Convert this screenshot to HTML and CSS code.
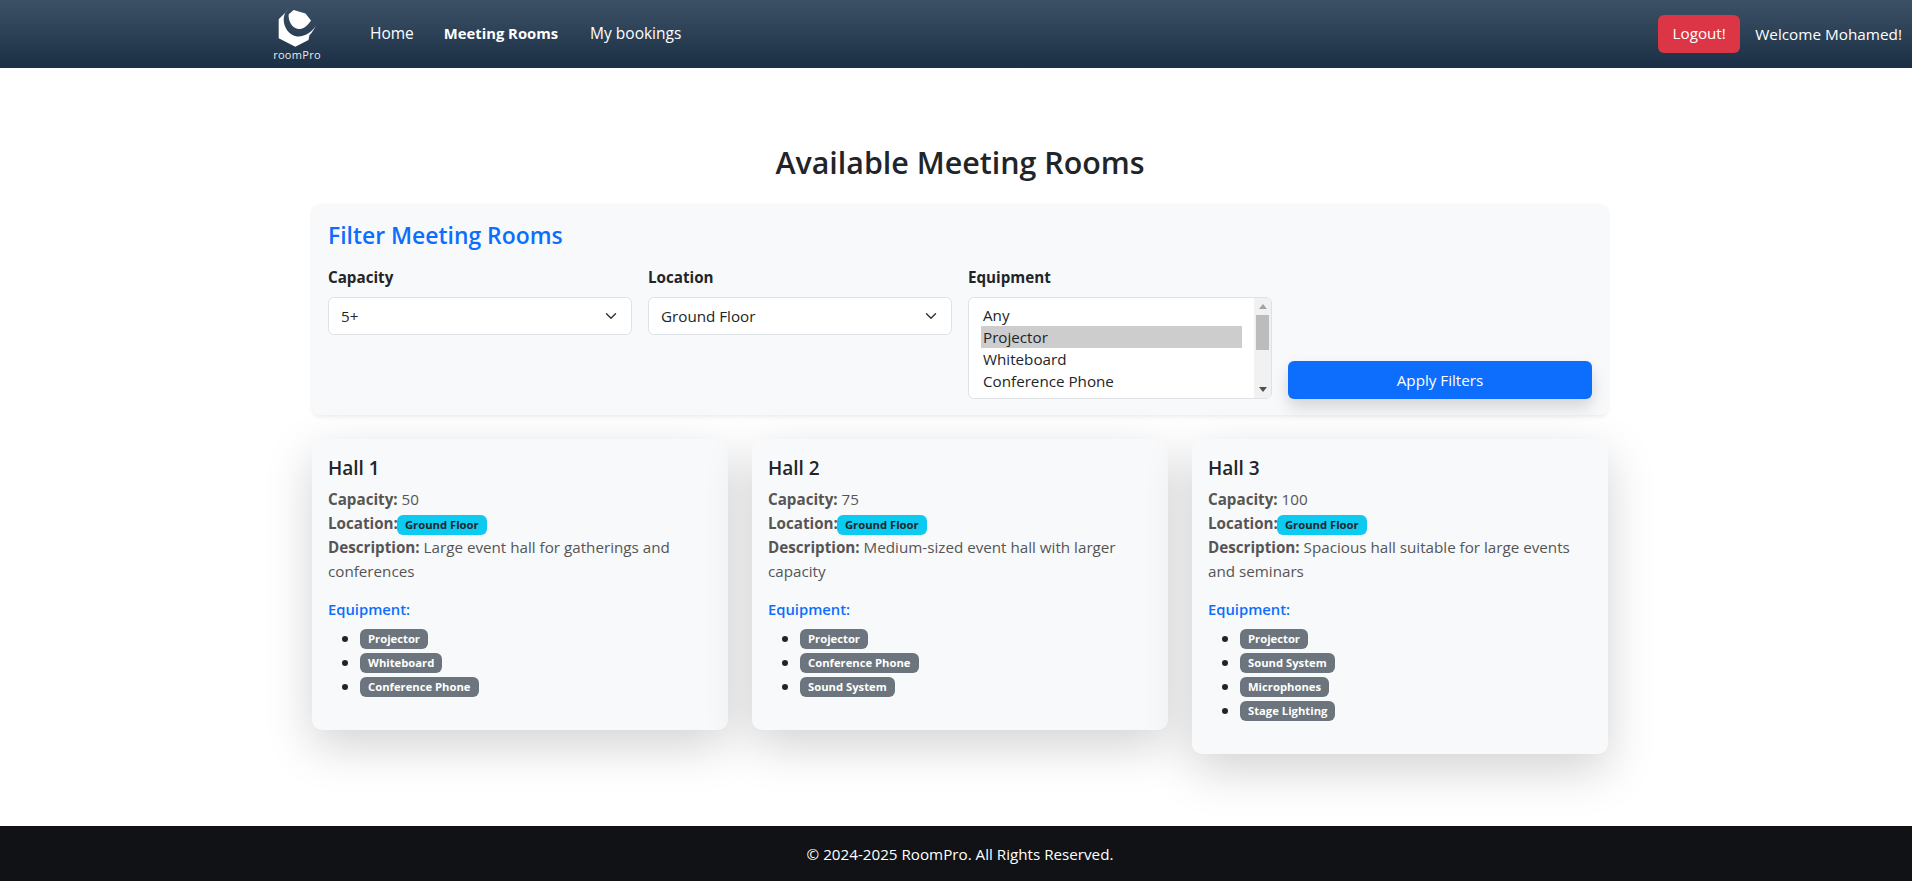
FILE: index.html
```html
<!DOCTYPE html>
<html lang="en">
<head>
    <meta charset="UTF-8">
    <meta name="viewport" content="width=device-width, initial-scale=1.0">
    <title>RoomPro - Meeting Rooms</title>
    <link rel="stylesheet" href="styles.css">
</head>
<body>
    <nav class="navbar">
        <a href="#" class="brand">
            <svg class="brand-icon" viewBox="0 0 40 40" width="40" height="40">
                <path fill="#fff" d="M16.7 2 L28.5 5.5 L34 12.5 C30 19 25 21.5 21 21 C15 20 11 13 11.7 6.3 Z"/>
                <path fill="#fff" d="M11.7 0.3 C8 4 6.5 8 6.7 12 C7 20 12 27 20 28.5 C28 29 36 24 39.3 16.3 C37 22 34 26 32.5 27 L31.5 32 L18.3 38.7 L1.7 30.3 L1.7 11.3 L8 5 Z"/>
            </svg>
            <span class="brand-name">roomPro</span>
        </a>
        <ul class="nav-links">
            <li><a href="#">Home</a></li>
            <li><a href="#" class="active">Meeting Rooms</a></li>
            <li><a href="#">My bookings</a></li>
        </ul>
        <div class="nav-user">
            <button class="btn-logout">Logout!</button>
            <span class="welcome">Welcome Mohamed!</span>
        </div>
    </nav>

    <main class="container">
        <h2 class="page-title">Available Meeting Rooms</h2>

        <form class="filter-panel">
            <h4>Filter Meeting Rooms</h4>
            <div class="filter-row">
                <div class="field">
                    <label for="capacity">Capacity</label>
                    <select id="capacity" class="form-select">
                        <option>5+</option>
                    </select>
                </div>
                <div class="field">
                    <label for="location">Location</label>
                    <select id="location" class="form-select">
                        <option>Ground Floor</option>
                    </select>
                </div>
                <div class="field">
                    <label for="equipment">Equipment</label>
                    <div class="multi-wrap">
                        <select id="equipment" class="form-multi" multiple>
                            <option>Any</option>
                            <option selected>Projector</option>
                            <option>Whiteboard</option>
                            <option>Conference Phone</option>
                            <option>Sound System</option>
                            <option>Microphones</option>
                            <option>Stage Lighting</option>
                        </select>
                        <div class="scroll-track">
                            <svg class="scroll-up" width="8" height="5" viewBox="0 0 8 5"><path fill="#a3a3a3" d="M4 0 8 5H0z"/></svg>
                            <div class="scroll-thumb"></div>
                            <svg class="scroll-down" width="8" height="5" viewBox="0 0 8 5"><path fill="#505050" d="M4 5 8 0H0z"/></svg>
                        </div>
                    </div>
                </div>
                <div class="field field-submit">
                    <button type="submit" class="btn-apply">Apply Filters</button>
                </div>
            </div>
        </form>

        <section class="room-grid">
            <article class="room-card">
                <h5>Hall 1</h5>
                <p>
                    <strong>Capacity:</strong> 50<br>
                    <strong>Location:</strong><span class="badge badge-info">Ground Floor</span><br>
                    <strong>Description:</strong> Large event hall for gatherings and conferences
                </p>
                <h6>Equipment:</h6>
                <ul>
                    <li><span class="badge">Projector</span></li>
                    <li><span class="badge">Whiteboard</span></li>
                    <li><span class="badge">Conference Phone</span></li>
                </ul>
            </article>
            <article class="room-card">
                <h5>Hall 2</h5>
                <p>
                    <strong>Capacity:</strong> 75<br>
                    <strong>Location:</strong><span class="badge badge-info">Ground Floor</span><br>
                    <strong>Description:</strong> Medium-sized event hall with larger capacity
                </p>
                <h6>Equipment:</h6>
                <ul>
                    <li><span class="badge">Projector</span></li>
                    <li><span class="badge">Conference Phone</span></li>
                    <li><span class="badge">Sound System</span></li>
                </ul>
            </article>
            <article class="room-card">
                <h5>Hall 3</h5>
                <p>
                    <strong>Capacity:</strong> 100<br>
                    <strong>Location:</strong><span class="badge badge-info">Ground Floor</span><br>
                    <strong>Description:</strong> Spacious hall suitable for large events and seminars
                </p>
                <h6>Equipment:</h6>
                <ul>
                    <li><span class="badge">Projector</span></li>
                    <li><span class="badge">Sound System</span></li>
                    <li><span class="badge">Microphones</span></li>
                    <li><span class="badge">Stage Lighting</span></li>
                </ul>
            </article>
        </section>
    </main>

    <footer class="footer">&copy; 2024-2025 RoomPro. All Rights Reserved.</footer>
</body>
</html>
```

FILE: styles.css
```css
html {
    overflow: hidden;
}

body {
    font-family: "Open Sans", "Noto Sans", sans-serif;
    font-size: 15.2px;
    line-height: 24px;
    color: #212529;
    background-color: #fff;
    margin: 0;
    width: 1920px;
}

.navbar {
    display: flex;
    align-items: center;
    height: 68px;
    padding: 0 18px 0 272px;
    background: linear-gradient(to bottom, #3d5166, #1a2e45);
}

.brand {
    display: flex;
    flex-direction: column;
    align-items: center;
    width: 50px;
    color: #fff;
    text-decoration: none;
}

.brand-icon {
    display: block;
    margin-top: 2px;
}

.brand-name {
    font-size: 11px;
    line-height: 14px;
    letter-spacing: 0.3px;
    color: #e8ebee;
}

.nav-links {
    display: flex;
    gap: 30px;
    list-style: none;
    margin: -2px 0 0 48px;
    padding: 0;
    font-size: 15.5px;
}

.nav-links a {
    color: #fff;
    text-decoration: none;
}

.nav-links a.active {
    font-weight: 700;
    font-size: 14.8px;
    margin-right: 2px;
}

.nav-user {
    display: flex;
    align-items: center;
    gap: 15px;
    margin-left: auto;
}

.btn-logout {
    height: 38px;
    width: 82px;
    padding: 0 0 2px;
    font: inherit;
    color: #fff;
    background-color: #dc3545;
    border: none;
    border-radius: 6px;
}

.welcome {
    color: #fff;
    font-size: 15.3px;
    margin-top: -1px;
}

.container {
    width: 1296px;
    margin: 0 auto;
    padding-top: 76px;
    height: 682px;
}

.page-title {
    font-size: 30.4px;
    font-weight: 600;
    line-height: 38px;
    text-align: center;
    margin: 0 0 22px;
}

.filter-panel {
    padding: 16px;
    background-color: #f8f9fa;
    border-radius: 8px;
    box-shadow: 0 2px 4px rgba(0, 0, 0, 0.075);
}

.filter-panel h4 {
    font-size: 22.9px;
    font-weight: 600;
    line-height: 31px;
    color: #0d6efd;
    margin: 0 0 14px;
}

.filter-row {
    display: grid;
    grid-template-columns: repeat(4, 1fr);
    gap: 16px;
}

.field label {
    display: block;
    font-weight: 700;
    margin-bottom: 8px;
}

.field-submit {
    display: flex;
    align-items: flex-end;
}

.form-select {
    display: block;
    width: 100%;
    height: 38px;
    padding: 0 36px 0 12px;
    font: inherit;
    color: #212529;
    background-color: #fff;
    background-image: url("data:image/svg+xml,%3csvg xmlns='http://www.w3.org/2000/svg' viewBox='0 0 16 16'%3e%3cpath fill='none' stroke='%23343a40' stroke-linecap='round' stroke-linejoin='round' stroke-width='2' d='m2 5 6 6 6-6'/%3e%3c/svg%3e");
    background-repeat: no-repeat;
    background-position: right 12px center;
    background-size: 16px 12px;
    border: 1px solid #dee2e6;
    border-radius: 6px;
    appearance: none;
}

.multi-wrap {
    position: relative;
}

.form-multi {
    display: block;
    box-sizing: border-box;
    width: 100%;
    height: 102px;
    padding: 6px 29px 0 12px;
    font: inherit;
    color: #212529;
    background-color: #fff;
    border: 1px solid #dee2e6;
    border-radius: 6px;
    overflow: hidden;
    outline: none;
}

.form-multi option {
    padding: 1px 2px 0;
    min-height: 21px;
    line-height: 21px;
}

.form-multi option:checked {
    background: linear-gradient(#cdcdcd, #cdcdcd);
    color: #212529;
}

/* drawn over the list so it looks like the windows scrollbar */
.scroll-track {
    position: absolute;
    top: 1px;
    right: 1px;
    bottom: 1px;
    width: 17px;
    display: flex;
    flex-direction: column;
    align-items: center;
    background-color: #f1f1f1;
    border-radius: 0 5px 5px 0;
}

.scroll-up {
    margin-top: 6px;
}

.scroll-thumb {
    width: 13px;
    height: 35px;
    margin-top: 6px;
    background-color: #bcbcbc;
}

.scroll-down {
    margin-top: auto;
    margin-bottom: 6px;
}

.btn-apply {
    width: 100%;
    height: 38px;
    padding: 0;
    font: inherit;
    color: #fff;
    background-color: #0d6efd;
    border: none;
    border-radius: 6px;
    box-shadow: 0 8px 16px rgba(0, 0, 0, 0.15);
}

.room-grid {
    display: grid;
    grid-template-columns: repeat(3, 1fr);
    gap: 24px;
    align-items: start;
    margin-top: 24px;
}

.room-card {
    padding: 16px;
    background-color: #f8f9fa;
    border-radius: 10px;
    box-shadow: 0 16px 48px rgba(0, 0, 0, 0.175);
}

.room-card h5 {
    font-size: 19px;
    font-weight: 600;
    line-height: 26px;
    margin: 0 0 6px;
}

.room-card p {
    color: #555;
    margin: 0 0 16px;
}

.room-card h6 {
    font-size: 14.8px;
    font-weight: 600;
    line-height: 21px;
    color: #0d6efd;
    margin: 0 0 7px;
}

.room-card ul {
    margin: 0 0 15px;
    padding-left: 32px;
    list-style: none;
}

.room-card li {
    display: flex;
    align-items: center;
    height: 24px;
}

.room-card li::before {
    content: "";
    width: 6px;
    height: 6px;
    margin: 0 12px 0 -18px;
    background-color: #212529;
    border-radius: 50%;
}

.badge {
    display: inline-block;
    padding: 4px 8px;
    font-size: 11.25px;
    font-weight: 700;
    line-height: 12px;
    color: #fff;
    background-color: #6c757d;
    border-radius: 6px;
    vertical-align: baseline;
}

.badge-info {
    margin-left: -1px;
    color: #212529;
    background-color: #0dcaf0;
}

.footer {
    display: flex;
    align-items: center;
    justify-content: center;
    height: 55px;
    color: #fff;
    background-color: #101215;
}
```
